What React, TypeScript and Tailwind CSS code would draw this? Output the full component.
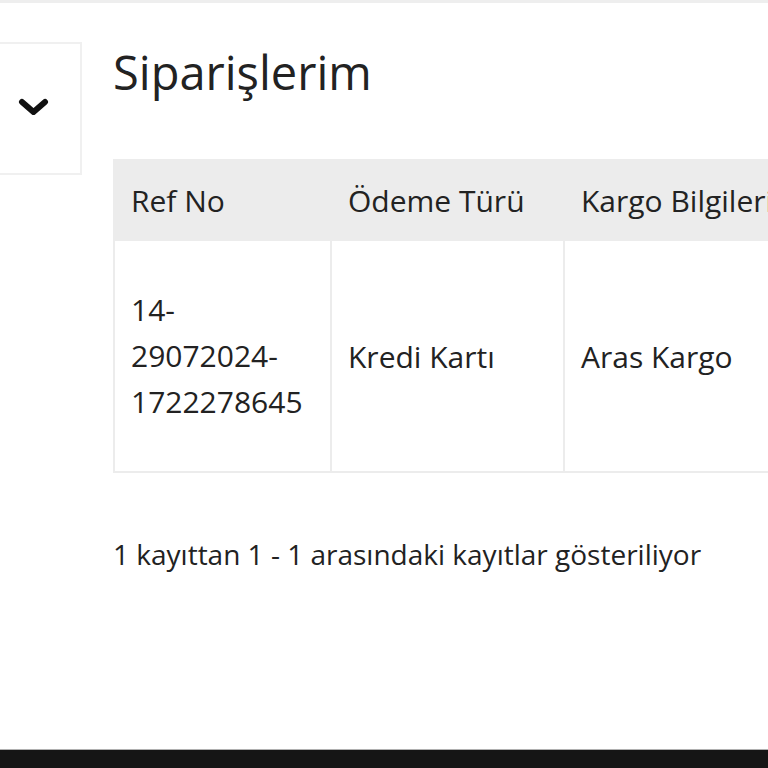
const font = { fontFamily: '"Open Sans", "Noto Sans", sans-serif' };

export default function App() {
  return (
    <div
      className="relative flex h-[768px] w-[768px] flex-col overflow-hidden bg-white text-[#222]"
      style={font}
    >
      {/* top strip */}
      <div className="h-[3px] w-full bg-[#eeeeee]" />

      <div className="flex flex-1 items-start pt-[39px]">
        {/* side toggle */}
        <div className="flex h-[133px] w-[82px] shrink-0 items-center justify-center border-2 border-l-0 border-[#f0f0f0] pr-[13px] pb-[4px]">
          <svg width="31" height="20" viewBox="0 0 31 20" fill="none">
            <path
              d="M4 5 L15.5 15 L27 5"
              stroke="#111"
              strokeWidth="6"
              strokeLinecap="round"
              strokeLinejoin="round"
            />
          </svg>
        </div>

        <div className="ml-[31px] min-w-0 flex-1">
          <h1 className="text-[47px] leading-[60px] font-normal">Siparişlerim</h1>

          <div className="mt-[57px] overflow-hidden">
            <table className="w-[760px] border-collapse text-[30px]">
              <thead>
                <tr className="bg-[#ececec]">
                  <th className="h-[80px] w-[217px] border-2 border-[#ececec] px-4 text-left font-normal">
                    Ref No
                  </th>
                  <th className="h-[80px] w-[233px] border-2 border-[#ececec] px-4 text-left font-normal">
                    Ödeme Türü
                  </th>
                  <th className="h-[80px] border-2 border-[#ececec] px-4 text-left font-normal whitespace-nowrap">
                    Kargo Bilgileri
                  </th>
                </tr>
              </thead>
              <tbody>
                <tr>
                  <td className="h-[232px] border-2 border-[#ececec] px-4 leading-[46px]">
                    14-
                    <br />
                    29072024-
                    <br />
                    1722278645
                  </td>
                  <td className="border-2 border-[#ececec] px-4">Kredi Kartı</td>
                  <td className="border-2 border-[#ececec] px-4">Aras Kargo</td>
                </tr>
              </tbody>
            </table>
          </div>

          <p className="mt-[60px] text-[28px]">
            1 kayıttan 1 - 1 arasındaki kayıtlar gösteriliyor
          </p>
        </div>
      </div>

      {/* footer bar */}
      <div className="h-px w-full bg-[#b0b0b0]" />
      <div className="h-[18px] w-full bg-[#151515]" />
    </div>
  );
}
